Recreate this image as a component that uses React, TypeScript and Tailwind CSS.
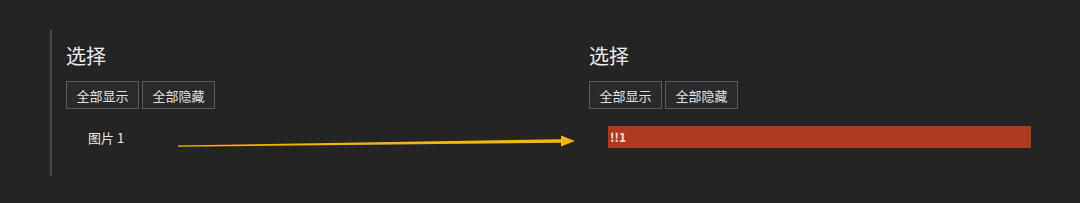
import React from "react";

const font = { fontFamily: '"Noto Sans CJK SC", "Noto Sans", sans-serif' };

function Buttons() {
  return (
    <div className="mt-[11px] flex gap-[3px]">
      {["全部显示", "全部隐藏"].map((t) => (
        <button
          key={t}
          type="button"
          className="h-[28px] w-[73px] border border-[#5a5a5a] bg-[#2a2a2a] text-[13px] leading-none text-[#e0e0e0]"
        >
          {t}
        </button>
      ))}
    </div>
  );
}

export default function App() {
  return (
    <main className="relative h-[203px] w-[1080px] overflow-hidden bg-[#242424] pt-[30px]" style={font}>
      <div className="flex">
        {/* left panel */}
        <section className="ml-[50px] h-[146px] w-[539px] border-l-2 border-[#4a4a4a] pl-[14px]">
          <h2 className="mt-[12px] text-[20px] leading-[28px] text-[#ececec]">选择</h2>
          <Buttons />
          <div className="mt-[18px] flex h-[22px] items-center pl-[22px] text-[13px] text-[#e6e6e6]">图片 1</div>
        </section>

        {/* right panel */}
        <section className="w-[442px]">
          <h2 className="mt-[12px] text-[20px] leading-[28px] text-[#ececec]">选择</h2>
          <Buttons />
          <div className="ml-[19px] mt-[17px] flex h-[22px] items-center bg-[#ad3a1e] pl-[2px] text-[12px] font-bold text-[#f3e2dc]">
            !!1
          </div>
        </section>
      </div>

      {/* connector arrow */}
      <svg className="absolute left-0 top-0" width="1080" height="203" viewBox="0 0 1080 203">
        <polygon
          points="178,145.4 561,139.2 561,135.6 575,141 561,146.4 561,142.8 178,146.8"
          fill="#f4b60a"
        />
      </svg>
    </main>
  );
}
